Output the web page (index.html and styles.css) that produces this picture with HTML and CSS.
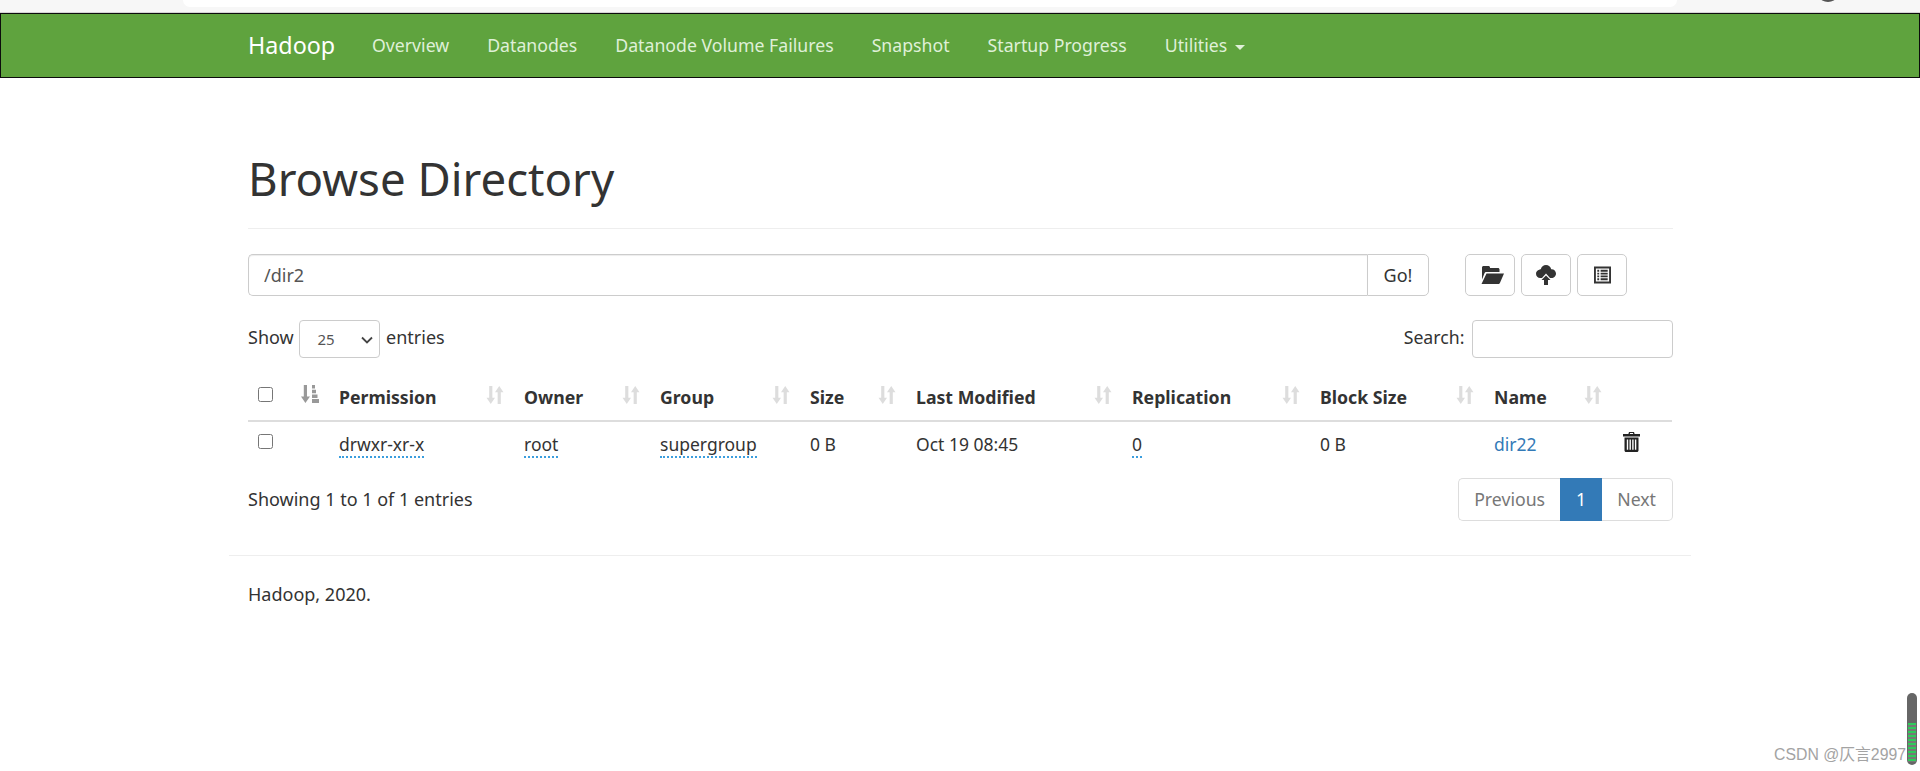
FILE: index.html
```html
<!DOCTYPE html>
<html lang="en">
<head>
<meta charset="utf-8">
<title>Browsing HDFS</title>
<link rel="stylesheet" href="styles.css">
</head>
<body>
<svg class="sprite" xmlns="http://www.w3.org/2000/svg">
  <symbol id="i-sort" viewBox="0 0 16 17"><path d="M2.500 0h3v11H8l-4 6-4-6h2.500zM12 0l4 6h-2.500v11h-3V6H8z"/></symbol>
  <symbol id="i-attr" viewBox="0 0 18 18"><path d="M2.800 0h3.200v11.500h3L4.400 18 0 11.500h2.800zM11 0h3v3.500h-3zM11 4.700h4v3.500h-4zM11 9.400h5.500v3.500H11zM11 14.100h7V18h-7z"/></symbol>
  <symbol id="i-folder" viewBox="0 0 24 18"><path d="M2 3V1.500C2 .7 2.700 0 3.500 0h5C9.300 0 10 .7 10 1.500V2h8c.8 0 1.500.7 1.500 1.500V6H6.500C5.500 6 4.800 6.500 4.500 7.300L2 13.500V3zM6.500 7.500H24l-4 9.200c-.3.8-1 1.300-1.800 1.300H1.500z"/></symbol>
  <symbol id="i-cloud" viewBox="0 0 20 20"><path fill-rule="evenodd" d="M10 0c2.600 0 4.700 1.800 5.200 4.200C17.900 4 20 6 20 8.500c0 2.400-2 4.500-4.500 4.500H14l-4-4.500L6 13H4.200C1.900 13 0 11.100 0 8.700 0 6.700 1.400 5.100 3.300 4.700 3.900 4.300 4.300 4.200 4.800 4.200 5.300 1.800 7.400 0 10 0zM10 10.500l4.500 4.500H12v5H8v-5H5.500z"/></symbol>
  <symbol id="i-list" viewBox="0 0 18 18"><path fill-rule="evenodd" d="M0 0h18v18H0zM2 2v14h14V2zM3.500 3.500h2v2h-2zM7 3.500h7.500v2H7zM3.500 6.500h2v2h-2zM7 6.500h7.500v2H7zM3.500 9.500h2v2h-2zM7 9.500h7.500v2H7zM3.500 12.500h2v2h-2zM7 12.500h7.500v2H7z"/></symbol>
  <symbol id="i-trash" viewBox="0 0 17 20"><path fill-rule="evenodd" d="M6 0h5l.6 2H17v2.500H0V2h5.400zM7 1l-.2 1h3.400l-.2-1zM1.500 5.500h14V18.500c0 .8-.7 1.500-1.500 1.500H3c-.8 0-1.500-.7-1.500-1.500zM3.800 7.500v10.300h1.400V7.500zM6.500 7.500v10.300h1.400V7.500zM9.200 7.500v10.300h1.400V7.500zM11.900 7.500v10.300h1.400V7.500z"/></symbol>
  <symbol id="i-chevron" viewBox="0 0 12 8"><path d="M1 1.500l5 5 5-5" fill="none" stroke="#444" stroke-width="1.800"/></symbol>
</svg>

<div class="chrome">
  <div class="chrome-pill"></div>
  <div class="chrome-avatar"></div>
</div>

<nav class="navbar">
  <div class="container nav-inner">
    <a class="brand">Hadoop</a>
    <ul class="nav-list">
      <li>Overview</li>
      <li>Datanodes</li>
      <li>Datanode Volume Failures</li>
      <li>Snapshot</li>
      <li>Startup Progress</li>
      <li>Utilities <span class="caret"></span></li>
    </ul>
  </div>
</nav>

<main class="container">
  <header class="page-header"><h1>Browse Directory</h1></header>

  <div class="path-row">
    <div class="input-group">
      <input class="path-input" type="text" value="/dir2">
      <button class="btn go-btn">Go!</button>
    </div>
    <div class="tools">
      <button class="btn icon-btn"><svg class="ic-folder"><use href="#i-folder"/></svg></button>
      <button class="btn icon-btn"><svg class="ic-cloud"><use href="#i-cloud"/></svg></button>
      <button class="btn icon-btn"><svg class="ic-list"><use href="#i-list"/></svg></button>
    </div>
  </div>

  <div class="table-controls">
    <div class="length">Show <span class="select-wrap"><select class="length-select"><option>25</option></select><svg class="chevron"><use href="#i-chevron"/></svg></span> entries</div>
    <label class="search">Search: <input class="search-input" type="text"></label>
  </div>

  <table class="files">
    <colgroup>
      <col class="c1"><col class="c2"><col class="c3"><col class="c4"><col class="c5"><col class="c6"><col class="c7"><col class="c8"><col class="c9"><col class="c10"><col class="c11">
    </colgroup>
    <thead>
      <tr>
        <th><input class="check" type="checkbox"></th>
        <th><svg class="sort active"><use href="#i-attr"/></svg></th>
        <th>Permission<svg class="sort"><use href="#i-sort"/></svg></th>
        <th>Owner<svg class="sort"><use href="#i-sort"/></svg></th>
        <th>Group<svg class="sort"><use href="#i-sort"/></svg></th>
        <th>Size<svg class="sort"><use href="#i-sort"/></svg></th>
        <th>Last Modified<svg class="sort"><use href="#i-sort"/></svg></th>
        <th>Replication<svg class="sort"><use href="#i-sort"/></svg></th>
        <th>Block Size<svg class="sort"><use href="#i-sort"/></svg></th>
        <th>Name<svg class="sort"><use href="#i-sort"/></svg></th>
        <th></th>
      </tr>
    </thead>
    <tbody>
      <tr>
        <td><input class="check" type="checkbox"></td>
        <td></td>
        <td><span class="explorer">drwxr-xr-x</span></td>
        <td><span class="explorer">root</span></td>
        <td><span class="explorer">supergroup</span></td>
        <td>0 B</td>
        <td>Oct 19 08:45</td>
        <td><span class="explorer">0</span></td>
        <td>0 B</td>
        <td><a class="link">dir22</a></td>
        <td><svg class="ic-trash"><use href="#i-trash"/></svg></td>
      </tr>
    </tbody>
  </table>

  <div class="table-footer">
    <div>Showing 1 to 1 of 1 entries</div>
    <div class="pagination">
      <span class="page">Previous</span><span class="page current">1</span><span class="page">Next</span>
    </div>
  </div>
</main>

<footer class="container footer">
  <hr class="footer-rule">
  <p>Hadoop, 2020.</p>
</footer>

<div class="watermark">CSDN @仄言2997</div>
<div class="meter"><div class="meter-fill"></div></div>
</body>
</html>
```

FILE: styles.css
```css
* { box-sizing: border-box; }
html, body { margin: 0; padding: 0; height: 771px; overflow: hidden; background: #fff; }
body { font-family: "Noto Sans", "Noto Sans CJK SC", sans-serif; font-size: 18px; line-height: 25px; color: #333; }
.sprite { display: none; }

.chrome { position: relative; height: 13px; background: #f7f7f7; border-bottom: 1px solid #d4d4d4; }
.chrome-pill { height: 7px; margin: 0 243px 0 183px; background: #fff; border-radius: 0 0 14px 14px; }
.chrome-avatar { position: absolute; left: 1820px; top: -8px; width: 16px; height: 10px; border-radius: 50%; background: #555; }

.container { width: 1462px; margin: 0 auto; padding: 0 18px 0 19px; }

.navbar { height: 65px; background: #5fa33e; border: 1px solid #0c0c0c; }
.nav-inner { display: flex; align-items: center; height: 63px; }
.brand { color: #fff; font-size: 23.300px; width: 124px; }
.nav-list { display: flex; list-style: none; margin: 0; padding: 0; color: #dff0d8; font-size: 17.700px; }
.nav-list li { margin-right: 38px; white-space: nowrap; }
.caret { display: inline-block; margin-left: 3px; vertical-align: middle; border-top: 5px solid #dff0d8; border-left: 5px solid transparent; border-right: 5px solid transparent; }

.page-header { margin-top: 75px; height: 76px; border-bottom: 1px solid #eee; }
h1 { margin: 0; font-size: 45.600px; font-weight: 400; line-height: 50px; }

.path-row { display: flex; margin-top: 25px; height: 42px; }
.input-group { display: flex; width: 1181px; }
.path-input { flex: 1; height: 42px; padding: 0 15px; font: inherit; color: #555; border: 1px solid #ccc; border-right: 0; border-radius: 5px 0 0 5px; box-shadow: inset 0 1px 1px rgba(0,0,0,.075); }
.btn { height: 42px; background: #fff; border: 1px solid #ccc; font: inherit; color: #333; padding: 0; }
.go-btn { width: 62px; border-radius: 0 5px 5px 0; }
.tools { display: flex; gap: 6px; margin-left: 36px; }
.icon-btn { width: 50px; border-radius: 5px; display: flex; align-items: center; justify-content: center; fill: #333; }
.ic-folder { width: 24px; height: 18px; margin-left: 3px; }
.ic-cloud { width: 20px; height: 20px; }
.ic-list { width: 17px; height: 18px; }

.table-controls { display: flex; justify-content: space-between; align-items: center; margin-top: 24px; height: 38px; }
.select-wrap { position: relative; display: inline-block; vertical-align: middle; height: 38px; margin: 0 1px; }
.length-select { display: block; appearance: none; width: 81px; height: 38px; padding: 0 17px; font-size: 15px; font-family: inherit; color: #555; background: #fff; border: 1px solid #ccc; border-radius: 4px; }
.chevron { position: absolute; right: 7px; top: 16px; width: 12px; height: 8px; pointer-events: none; }
.search { font-size: 17.700px; }
.search-input { width: 201px; height: 38px; margin-left: 3px; border: 1px solid #ccc; border-radius: 4px; vertical-align: middle; }

.files { width: 1424px; table-layout: fixed; border-collapse: collapse; margin-top: 16px; font-size: 17.500px; }
.c1 { width: 43px; } .c2 { width: 38px; } .c3 { width: 185px; } .c4 { width: 136px; } .c5 { width: 150px; } .c6 { width: 106px; }
.c7 { width: 216px; } .c8 { width: 188px; } .c9 { width: 174px; } .c10 { width: 128px; } .c11 { width: 60px; }
.files th { position: relative; height: 47px; padding: 0 10px; text-align: left; font-size: 17.700px; font-weight: 700; border-bottom: 2px solid #ddd; vertical-align: middle; }
.files td { height: 46px; padding: 0 10px; vertical-align: middle; }
.check { width: 15px; height: 15px; margin: 0; vertical-align: 2px; }
.sort { position: absolute; right: 10px; top: 12px; width: 18px; height: 18px; fill: #ddd; }
.sort.active { left: 10px; right: auto; top: 11px; fill: #999; width: 18px; height: 18px; }
.explorer { border-bottom: 2px dotted #3b9ede; }
.link { color: #337ab7; }
.ic-trash { width: 17px; height: 20px; fill: #222; vertical-align: 0; margin-left: 1px; }

.table-footer { display: flex; justify-content: space-between; align-items: center; height: 43px; margin-top: 11px; }
.pagination { display: flex; height: 43px; color: #777; font-size: 17.700px; }
.page { display: flex; align-items: center; padding: 0 16px; border: 1px solid #ddd; }
.page:first-child { border-right: 0; padding: 0 15px; border-radius: 5px 0 0 5px; }
.page:last-child { border-left: 0; padding-left: 15px; border-radius: 0 5px 5px 0; }
.page.current { background: #337ab7; color: #fff; border: 0; }

.footer-rule { margin: 34px -18px 0 -19px; border: 0; border-top: 1px solid #eee; }
.footer p { margin: 26px 0 0; }

.watermark { position: absolute; right: 14px; top: 746px; font-family: "Liberation Sans", "Noto Sans CJK SC", sans-serif; font-size: 15.800px; line-height: 18px; color: #a3a3a3; }
.meter { position: absolute; left: 1907px; top: 693px; width: 10px; height: 72px; background: #666; border-radius: 5px; overflow: hidden; }
.meter-fill { position: absolute; left: 1px; right: 1px; bottom: 3px; height: 39px; background: repeating-linear-gradient(to bottom, #2ecc5a 0 2px, #777 2px 4px); }
```
